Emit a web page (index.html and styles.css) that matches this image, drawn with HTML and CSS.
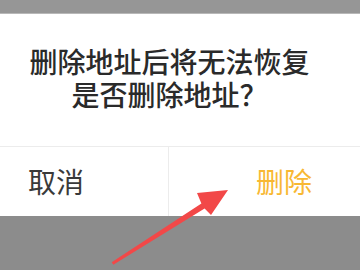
FILE: index.html
```html
<!DOCTYPE html>
<html lang="zh-CN">
<head>
<meta charset="utf-8">
<link rel="stylesheet" href="styles.css">
</head>
<body>
<div class="screen">
  <div class="mask-top"></div>
  <div class="dialog">
    <div class="message">
      <p>删除地址后将无法恢复<br>是否删除地址？</p>
    </div>
    <div class="actions">
      <div class="btn cancel">取消</div>
      <div class="btn confirm">删除</div>
    </div>
  </div>
  <div class="mask-bottom"></div>
  <svg class="arrow" width="360" height="270" viewBox="0 0 360 270">
    <polygon fill="#f24848" points="111.7,262.2 201.4,203.5 197,193 228,190 211,215 204.6,208.5 113.3,264.8"/>
  </svg>
</div>
</body>
</html>
```
FILE: styles.css
```css
html, body {
  margin: 0;
  padding: 0;
}
body {
  width: 360px;
  height: 270px;
  overflow: hidden;
  background: #8c8c8c;
  font-family: "Noto Sans CJK SC", "Noto Sans", sans-serif;
}
.screen {
  position: relative;
  width: 360px;
  height: 270px;
  display: flex;
  flex-direction: column;
}
.mask-top {
  height: 13px;
  background: #969696;
  border-bottom: 1px solid #b8b8b8;
}
.dialog {
  background: #ffffff;
  height: 202px;
  display: flex;
  flex-direction: column;
}
.message {
  height: 133px;
  box-sizing: border-box;
  padding: 31px 21px 0 0;
  text-align: center;
  color: #2a2a2a;
  font-size: 28px;
  font-weight: 500;
  line-height: 33px;
  border-bottom: 1px solid #ececec;
}
.message p {
  margin: 0;
}
.actions {
  flex: 1;
  display: flex;
}
.btn {
  display: flex;
  align-items: center;
  font-size: 28px;
  font-weight: 400;
  line-height: 33px;
}
.cancel {
  width: 169px;
  box-sizing: border-box;
  padding-left: 28px;
  color: #3a3a3a;
  border-right: 1px solid #ececec;
}
.confirm {
  flex: 1;
  padding-left: 87px;
  color: #f8b833;
}
.mask-bottom {
  flex: 1;
  background: #8c8c8c;
}
.arrow {
  position: absolute;
  left: 0;
  top: 0;
}
```
